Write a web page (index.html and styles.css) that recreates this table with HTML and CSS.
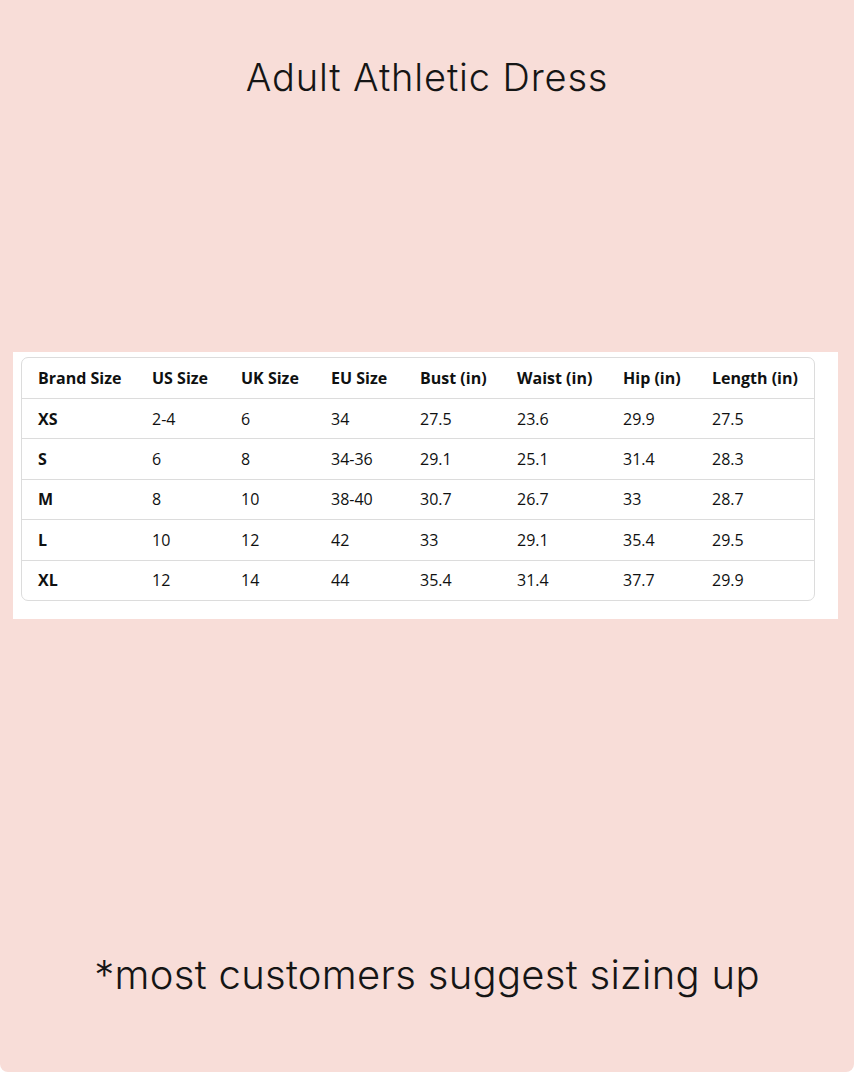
FILE: index.html
```html
<!DOCTYPE html>
<html lang="en">
<head>
<meta charset="utf-8">
<title>Adult Athletic Dress</title>
<link rel="stylesheet" href="styles.css">
</head>
<body>
<main class="page">
  <h1 class="title">Adult Athletic Dress</h1>
  <section class="panel">
    <div class="chart">
      <table class="sizes">
        <colgroup>
          <col class="c1"><col class="c2"><col class="c3"><col class="c4">
          <col class="c5"><col class="c6"><col class="c7"><col class="c8">
        </colgroup>
        <thead>
          <tr><th>Brand Size</th><th>US Size</th><th>UK Size</th><th>EU Size</th><th>Bust (in)</th><th>Waist (in)</th><th>Hip (in)</th><th>Length (in)</th></tr>
        </thead>
        <tbody>
          <tr><th>XS</th><td>2-4</td><td>6</td><td>34</td><td>27.5</td><td>23.6</td><td>29.9</td><td>27.5</td></tr>
          <tr><th>S</th><td>6</td><td>8</td><td>34-36</td><td>29.1</td><td>25.1</td><td>31.4</td><td>28.3</td></tr>
          <tr><th>M</th><td>8</td><td>10</td><td>38-40</td><td>30.7</td><td>26.7</td><td>33</td><td>28.7</td></tr>
          <tr><th>L</th><td>10</td><td>12</td><td>42</td><td>33</td><td>29.1</td><td>35.4</td><td>29.5</td></tr>
          <tr><th>XL</th><td>12</td><td>14</td><td>44</td><td>35.4</td><td>31.4</td><td>37.7</td><td>29.9</td></tr>
        </tbody>
      </table>
    </div>
  </section>
  <p class="note">*most customers suggest sizing up</p>
</main>
</body>
</html>
```
FILE: styles.css
```css
html, body {
  margin: 0;
  padding: 0;
  background: #ffffff;
}
.page {
  width: 854px;
  height: 1072px;
  box-sizing: border-box;
  background: #f8ddd8;
  border-radius: 0 0 8px 8px;
  display: flex;
  flex-direction: column;
  align-items: stretch;
  overflow: hidden;
}
.title {
  margin: 0;
  padding-top: 53px;
  text-align: center;
  font-family: "Inter", "Noto Sans", sans-serif;
  font-weight: 300;
  font-size: 38px;
  line-height: 48px;
  color: #151515;
  letter-spacing: 0.85px;
}
.panel {
  margin: 251px 16px 0 13px;
  background: #ffffff;
  padding: 5px 23px 18px 8px;
}
.chart {
  border: 1px solid #dcdcdc;
  border-radius: 7px;
  overflow: hidden;
}
.sizes {
  width: 100%;
  border-collapse: collapse;
  table-layout: fixed;
  font-family: "Open Sans", "Noto Sans", sans-serif;
  font-size: 16px;
  color: #0f1111;
}
.c1 { width: 114px; }
.c2 { width: 89px; }
.c3 { width: 90px; }
.c4 { width: 89px; }
.c5 { width: 97px; }
.c6 { width: 106px; }
.c7 { width: 89px; }
.sizes th, .sizes td {
  text-align: left;
  padding: 0 0 0 16px;
  height: 39.4px;
  white-space: nowrap;
}
.sizes thead th { height: 40px; }
.sizes th { font-weight: 700; }
.sizes td { font-weight: 400; }
.sizes tbody tr { border-top: 1px solid #dcdcdc; }
.note {
  margin: auto 0 0;
  padding-bottom: 72px;
  text-align: center;
  font-family: "Inter", "Noto Sans", sans-serif;
  font-weight: 300;
  font-size: 40px;
  line-height: 50px;
  color: #151515;
  letter-spacing: 0.3px;
}
```
